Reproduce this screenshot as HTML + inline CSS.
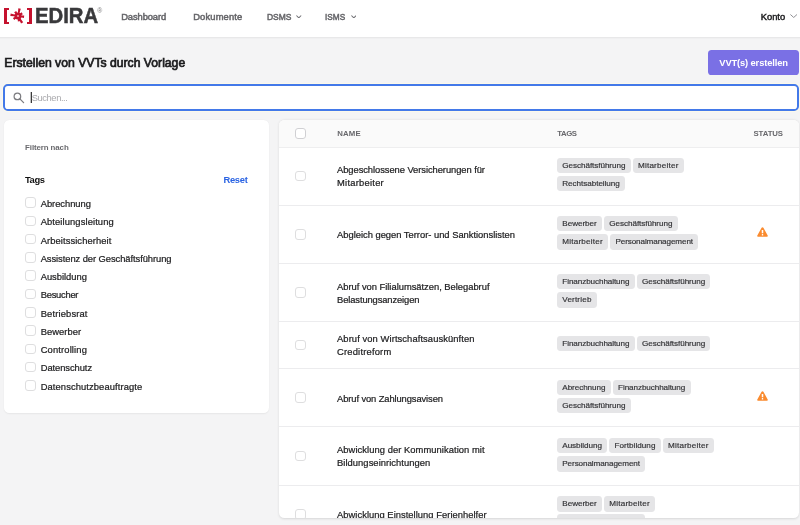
<!DOCTYPE html>
<html lang="de">
<head>
<meta charset="utf-8">
<title>EDIRA</title>
<style>
*{box-sizing:border-box;margin:0;padding:0}
html,body{width:800px;height:525px;overflow:hidden}
body{background:#f4f4f5;font-family:"Liberation Sans","DejaVu Sans",sans-serif;color:#1f1f1f;position:relative}
div,span,a,svg{position:absolute}
.w{left:0;top:0;width:800px;height:525px;overflow:hidden;will-change:transform}
.navsh{left:-10px;top:0;width:820px;height:36.7px;box-shadow:0 .6px 2.2px rgba(0,0,0,.11)}
.nav{left:0;top:0;width:800px;height:36.7px;background:#fff}
.br{background:#c5122e}
.name{left:34.55px;top:4.4px;font-weight:bold;font-size:21.5px;color:#39393b;line-height:24px;white-space:nowrap;transform:scaleX(.945);transform-origin:0 0;-webkit-text-stroke:.5px #39393b}
.reg{left:97.2px;top:6.2px;font-size:6.8px;line-height:10px;color:#7c7c7e}
.nl{top:11.05px;font-size:9.375px;color:#636366;line-height:12px;white-space:nowrap;-webkit-text-stroke:.5px #66666a}
.konto{color:#1d1d1f;-webkit-text-stroke:.45px #1d1d1f}
.chev{top:14.4px;width:6.4px;height:4.4px}
h1{position:absolute;left:4.3px;top:54.9px;font-size:12.2px;font-weight:normal;color:#1b1b1d;line-height:16px;white-space:nowrap;letter-spacing:.0px;-webkit-text-stroke:.7px #1b1b1d}
.btn{left:708.3px;top:50.3px;width:90.5px;height:24.5px;border-radius:3.6px;background:#7a70e5;color:#fff;font-size:9.375px;font-weight:bold;text-align:center;line-height:27.6px;white-space:nowrap;letter-spacing:-.14px}
.search{left:3px;top:84px;width:796px;height:27px;border:2px solid #4379e9;border-radius:4.8px;background:#fff;box-shadow:0 0 0 1px #fcf9ea}
.ph{left:26.7px;top:6.1px;font-size:9.375px;color:#a9a9ad;line-height:12px;letter-spacing:-.42px}
.cur{left:26px;top:6px;width:1px;height:11px;background:#3a3a3a;box-shadow:-1px 0 0 rgba(60,60,60,.3)}
.panel{background:#fff;border-radius:5.5px}
.left{left:4.4px;top:120.4px;width:264.6px;height:292.5px;box-shadow:0 .5px 1.6px rgba(0,0,0,.06)}
.fn{left:20.7px;top:22.75px;font-size:7.9px;font-weight:bold;color:#6a6a6e;line-height:10px;white-space:nowrap;letter-spacing:-.1px}
.tg{left:20.6px;top:53.55px;font-size:9.375px;font-weight:bold;color:#111;line-height:12px;letter-spacing:-.4px}
.rs{left:219px;top:53.55px;font-size:9.375px;font-weight:bold;color:#2b64e3;line-height:12px;letter-spacing:-.25px}
.cb{width:10.5px;height:10.5px;border:1px solid #dededf;border-radius:3px;background:#fff}
.it{left:36.3px;font-size:9.375px;color:#1c1c1e;-webkit-text-stroke:.22px #1c1c1e;line-height:12px;white-space:nowrap}
.right{left:279px;top:120.4px;width:520.2px;height:397.5px;box-shadow:0 .6px 2.5px rgba(0,0,0,.12);overflow:hidden}
.hd{left:0;top:0;width:100%;height:27.2px;background:#fafafa;border-bottom:1.1px solid #eeeeef}
.th{top:8.75px;font-size:7.8px;font-weight:bold;color:#68686c;line-height:10px;white-space:nowrap}
.ln{left:0;width:100%;height:1px;background:#ececee}
.nm{left:58px;font-size:9.375px;color:#1c1c1e;-webkit-text-stroke:.22px #1c1c1e;line-height:13.2px;white-space:nowrap}
.tag{height:15.2px;line-height:16px;background:#e5e5e7;border-radius:3.4px;font-size:8.125px;color:#333336;-webkit-text-stroke:.18px #333336;text-align:center;white-space:nowrap}
.warn{width:11px;height:10px}
</style>
</head>
<body>
<div class="w">
<div class="navsh"></div><div class="nav">
<div class="br" style="left:4.1px;top:8.4px;width:2.7px;height:15.5px"></div><div class="br" style="left:4.1px;top:8.4px;width:5.2px;height:2.1px"></div><div class="br" style="left:4.1px;top:21.8px;width:5.2px;height:2.1px"></div><svg style="left:9.6px;top:8.2px" width="16" height="16" viewBox="-8 -8 16 16"><path fill="#c5122e" d="M0.54 0.11 2.80 -7.17 0.36 -7.69 -0.54 -0.11ZM0.30 0.46 4.87 -1.67 3.51 -3.77 -0.30 -0.46ZM-0.06 0.55 5.94 1.88 6.20 -0.61 0.06 -0.55ZM-0.47 0.28 3.05 7.50 5.19 6.21 0.47 -0.28ZM-0.54 0.11 -0.12 5.44 2.32 4.92 0.54 -0.11ZM-0.32 -0.45 -5.14 2.07 -3.71 4.12 0.32 0.45ZM0.09 -0.54 -7.31 -2.42 -7.70 0.05 -0.09 0.54ZM0.46 -0.30 -1.78 -5.04 -3.88 -3.68 -0.46 0.30Z"/><circle r="3.6" fill="#c5122e"/><circle r="1.1" fill="#eda3ad"/></svg><div class="br" style="left:29.00px;top:8.4px;width:2.7px;height:15.5px"></div><div class="br" style="left:26.5px;top:8.4px;width:5.2px;height:2.1px"></div><div class="br" style="left:26.5px;top:21.8px;width:5.2px;height:2.1px"></div>
<div class="name">EDIRA</div><div class="reg">®</div>
<a class="nl" style="left:121.2px;letter-spacing:-.1px">Dashboard</a>
<a class="nl" style="left:193.2px;letter-spacing:.15px">Dokumente</a>
<a class="nl" style="left:266.5px;transform:scaleX(.905);transform-origin:0 0">DSMS</a><svg style="left:296.1px;top:14.7px;width:5.6px;height:3.5px" viewBox="0 0 5.6 3.5"><path d="M.4 .5 2.8 2.9 5.199999999999999 .5" fill="none" stroke="#737377" stroke-width="1.05"/></svg>
<a class="nl" style="left:325.3px;transform:scaleX(.88);transform-origin:0 0">ISMS</a><svg style="left:350.7px;top:14.7px;width:5.6px;height:3.5px" viewBox="0 0 5.6 3.5"><path d="M.4 .5 2.8 2.9 5.199999999999999 .5" fill="none" stroke="#737377" stroke-width="1.05"/></svg>
<a class="nl konto" style="left:760.8px;letter-spacing:-.03px">Konto</a><svg style="left:790.2px;top:14.2px;width:7.4px;height:4.1px" viewBox="0 0 7.4 4.1"><path d="M.4 .5 3.7 3.4999999999999996 7.0 .5" fill="none" stroke="#8a8a8e" stroke-width="0.95"/></svg>
</div>
<h1>Erstellen von VVTs durch Vorlage</h1>
<div class="btn">VVT(s) erstellen</div>
<div class="search"><svg style="left:7.5px;top:5.5px" width="12" height="12" viewBox="0 0 12 12"><circle cx="4.4" cy="4.4" r="3.3" fill="none" stroke="#7c7c80" stroke-width="1.2"/><path d="M6.9 6.9 10.6 10.6" stroke="#7c7c80" stroke-width="1.3" stroke-linecap="round"/></svg><span class="ph">Suchen...</span><div class="cur"></div></div>
<div class="panel left">
<div class="fn">Filtern nach</div>
<div class="tg">Tags</div>
<div class="rs">Reset</div>
<div class="cb" style="left:20.75px;top:77.05px"></div><div class="it" style="top:77.70px;letter-spacing:-0.031px">Abrechnung</div>
<div class="cb" style="left:20.75px;top:95.31px"></div><div class="it" style="top:95.70px;letter-spacing:0.106px">Abteilungsleitung</div>
<div class="cb" style="left:20.75px;top:113.57px"></div><div class="it" style="top:114.70px;letter-spacing:0.088px">Arbeitssicherheit</div>
<div class="cb" style="left:20.75px;top:131.83px"></div><div class="it" style="top:132.70px;letter-spacing:-0.064px">Assistenz der Geschäftsführung</div>
<div class="cb" style="left:20.75px;top:150.09px"></div><div class="it" style="top:150.70px;letter-spacing:-0.014px">Ausbildung</div>
<div class="cb" style="left:20.75px;top:168.35px"></div><div class="it" style="top:168.70px;letter-spacing:-0.25px">Besucher</div>
<div class="cb" style="left:20.75px;top:186.61px"></div><div class="it" style="top:187.70px;letter-spacing:0.153px">Betriebsrat</div>
<div class="cb" style="left:20.75px;top:204.87px"></div><div class="it" style="top:205.70px;letter-spacing:0.063px">Bewerber</div>
<div class="cb" style="left:20.75px;top:223.13px"></div><div class="it" style="top:223.70px;letter-spacing:0.145px">Controlling</div>
<div class="cb" style="left:20.75px;top:241.39px"></div><div class="it" style="top:241.70px;letter-spacing:-0.063px">Datenschutz</div>
<div class="cb" style="left:20.75px;top:259.65px"></div><div class="it" style="top:260.70px;letter-spacing:0.1px">Datenschutzbeauftragte</div>
</div>
<div class="panel right">
<div class="hd"></div>
<div class="cb" style="border-color:#d0d0d3;left:16.30px;top:7.90px"></div>
<div class="th" style="left:58.20px;letter-spacing:.2px">NAME</div>
<div class="th" style="left:278.20px;letter-spacing:-.42px">TAGS</div>
<div class="th" style="left:474.50px;letter-spacing:-.1px">STATUS</div>
<div class="cb" style="left:16.30px;top:50.43px"></div>
<div class="nm" style="top:43.70px;letter-spacing:-0.058px">Abgeschlossene Versicherungen für</div><div class="nm" style="top:56.70px;letter-spacing:0.253px">Mitarbeiter</div>
<div class="tag" style="left:278.00px;top:37.35px;width:73.7px;letter-spacing:-0.061px;text-indent:-0.030px">Geschäftsführung</div><div class="tag" style="left:353.70px;top:37.35px;width:51.1px;letter-spacing:0.219px;text-indent:0.110px">Mitarbeiter</div>
<div class="tag" style="left:278.00px;top:55.85px;width:68.1px;letter-spacing:-0.047px;text-indent:-0.024px">Rechtsabteilung</div>
<div class="ln" style="top:84.35px"></div>
<div class="cb" style="left:16.30px;top:108.70px"></div>
<div class="nm" style="top:108.70px;letter-spacing:-0.007px">Abgleich gegen Terror- und Sanktionslisten</div>
<div class="tag" style="left:278.00px;top:95.60px;width:45px;letter-spacing:-0.046px;text-indent:-0.023px">Bewerber</div><div class="tag" style="left:325.00px;top:95.60px;width:73.7px;letter-spacing:-0.061px;text-indent:-0.030px">Geschäftsführung</div>
<div class="tag" style="left:278.00px;top:114.10px;width:51.1px;letter-spacing:0.219px;text-indent:0.110px">Mitarbeiter</div><div class="tag" style="left:331.10px;top:114.10px;width:88.25px;letter-spacing:-0.099px;text-indent:-0.050px">Personalmanagement</div>
<svg class="warn" style="left:478.20px;top:106.90px" viewBox="0 0 11 10"><path d="M5.5 .2Q6.1 .2 6.4 .8L10.7 8.4Q11.1 9.7 10 9.8H1Q-.1 9.7 .3 8.4L4.6 .8Q4.9 .2 5.5 .2Z" fill="#fa8b2f"/><rect x="4.75" y="3" width="1.5" height="3.3" rx=".4" fill="#fff"/><rect x="4.75" y="7.1" width="1.5" height="1.5" rx=".4" fill="#fff"/></svg>
<div class="ln" style="top:142.45px"></div>
<div class="cb" style="left:16.30px;top:166.65px"></div>
<div class="nm" style="top:160.70px;letter-spacing:-0.013px">Abruf von Filialumsätzen, Belegabruf</div><div class="nm" style="top:173.70px;letter-spacing:-0.106px">Belastungsanzeigen</div>
<div class="tag" style="left:278.00px;top:153.85px;width:77.75px;letter-spacing:-0.086px;text-indent:-0.043px">Finanzbuchhaltung</div><div class="tag" style="left:357.75px;top:153.85px;width:73.7px;letter-spacing:-0.061px;text-indent:-0.030px">Geschäftsführung</div>
<div class="tag" style="left:278.00px;top:172.10px;width:39.75px;letter-spacing:0.171px;text-indent:0.086px">Vertrieb</div>
<div class="ln" style="top:200.25px"></div>
<div class="cb" style="left:16.30px;top:219.17px"></div>
<div class="nm" style="top:212.70px;letter-spacing:0.092px">Abruf von Wirtschaftsauskünften</div><div class="nm" style="top:225.70px;letter-spacing:0.203px">Creditreform</div>
<div class="tag" style="left:278.00px;top:215.90px;width:77.75px;letter-spacing:-0.086px;text-indent:-0.043px">Finanzbuchhaltung</div><div class="tag" style="left:357.75px;top:215.90px;width:73.7px;letter-spacing:-0.061px;text-indent:-0.030px">Geschäftsführung</div>
<div class="ln" style="top:247.50px"></div>
<div class="cb" style="left:16.30px;top:272.10px"></div>
<div class="nm" style="top:272.70px;letter-spacing:-0.097px">Abruf von Zahlungsavisen</div>
<div class="tag" style="left:278.00px;top:259.60px;width:53.75px;letter-spacing:-0.067px;text-indent:-0.034px">Abrechnung</div><div class="tag" style="left:333.75px;top:259.60px;width:77.75px;letter-spacing:-0.086px;text-indent:-0.043px">Finanzbuchhaltung</div>
<div class="tag" style="left:278.00px;top:277.85px;width:73.7px;letter-spacing:-0.061px;text-indent:-0.030px">Geschäftsführung</div>
<svg class="warn" style="left:478.20px;top:270.30px" viewBox="0 0 11 10"><path d="M5.5 .2Q6.1 .2 6.4 .8L10.7 8.4Q11.1 9.7 10 9.8H1Q-.1 9.7 .3 8.4L4.6 .8Q4.9 .2 5.5 .2Z" fill="#fa8b2f"/><rect x="4.75" y="3" width="1.5" height="3.3" rx=".4" fill="#fff"/><rect x="4.75" y="7.1" width="1.5" height="1.5" rx=".4" fill="#fff"/></svg>
<div class="ln" style="top:306.10px"></div>
<div class="cb" style="left:16.30px;top:330.55px"></div>
<div class="nm" style="top:323.70px;letter-spacing:0.063px">Abwicklung der Kommunikation mit</div><div class="nm" style="top:336.70px;letter-spacing:0.059px">Bildungseinrichtungen</div>
<div class="tag" style="left:278.00px;top:317.85px;width:50.25px;letter-spacing:-0.054px;text-indent:-0.027px">Ausbildung</div><div class="tag" style="left:330.25px;top:317.85px;width:51.5px;letter-spacing:0.032px;text-indent:0.016px">Fortbildung</div><div class="tag" style="left:383.75px;top:317.85px;width:51.1px;letter-spacing:0.219px;text-indent:0.110px">Mitarbeiter</div>
<div class="tag" style="left:278.00px;top:336.10px;width:88.25px;letter-spacing:-0.099px;text-indent:-0.050px">Personalmanagement</div>
<div class="ln" style="top:364.40px"></div>
<div class="cb" style="left:16.30px;top:388.80px"></div>
<div class="nm" style="top:388.70px;letter-spacing:0.039px">Abwicklung Einstellung Ferienhelfer</div>
<div class="tag" style="left:278.00px;top:376.10px;width:45px;letter-spacing:-0.046px;text-indent:-0.023px">Bewerber</div><div class="tag" style="left:325.00px;top:376.10px;width:51.1px;letter-spacing:0.219px;text-indent:0.110px">Mitarbeiter</div>
<div class="tag" style="left:278.00px;top:394.10px;width:88.25px;letter-spacing:-0.099px;text-indent:-0.050px">Personalmanagement</div>
</div>
</div>
</body>
</html>
